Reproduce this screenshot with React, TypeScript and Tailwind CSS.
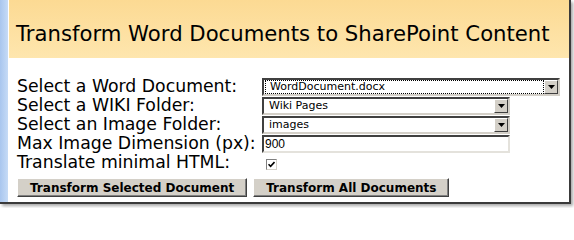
import React from 'react';

const sans = { fontFamily: '"DejaVu Sans", Verdana, sans-serif' };

function DropArrow() {
  return (
    <div className="flex h-[14px] w-[14px] shrink-0 items-center justify-center border border-t-white border-l-white border-r-[#404040] border-b-[#404040] bg-[#d4d0c8]">
      <svg width="7" height="4" viewBox="0 0 7 4">
        <path d="M0 0h7L3.5 4z" fill="#000" />
      </svg>
    </div>
  );
}

function Select({ value, width, focused }: { value: string; width: string; focused?: boolean }) {
  return (
    <div className={`flex h-[18px] items-center border-2 border-t-[#404040] border-l-[#404040] border-r-[#d4d0c8] border-b-[#d4d0c8] bg-white ${width}`}>
      <div
        className={`ml-[1px] flex h-[14px] flex-1 items-center pl-[4px] text-[11px] leading-none text-black ${
          focused ? 'border border-dotted border-black' : ''
        }`}
      >
        {value}
      </div>
      <DropArrow />
    </div>
  );
}

function Label({ children }: { children: React.ReactNode }) {
  return <div className="text-[17.3px] leading-none text-black">{children}</div>;
}

function Button({ children }: { children: React.ReactNode }) {
  return (
    <div className="flex h-[19px] items-center border border-t-white border-l-white border-r-[#404040] border-b-[#404040] bg-[#d4d0c8] px-[12px] text-[12px] font-bold leading-none text-black shadow-[inset_-1px_-1px_0_#808080]">
      {children}
    </div>
  );
}

export default function App() {
  return (
    <div className="h-[208px] w-[574px] overflow-hidden bg-white" style={sans}>
      <div className="flex h-[204px] w-[571px] border-r-2 border-b-2 border-[#3a3a3a] shadow-[2px_2px_3px_rgba(0,0,0,0.35)]">
        {/* left strip */}
        <div className="w-[8px] shrink-0 bg-gradient-to-r from-[#a9c6ee] to-[#c6dbf6]" />
        <div className="w-[1px] shrink-0 bg-white" />

        <div className="flex flex-1 flex-col">
          {/* header */}
          <div className="flex h-[58px] items-center bg-gradient-to-b from-[#fcda93] to-[#fee6ae] pl-[7px] pt-[9px]">
            <h1 className="text-[21.2px] font-normal leading-none text-black">
              Transform Word Documents to SharePoint Content
            </h1>
          </div>

          {/* form */}
          <div className="flex flex-col pl-[8px] pt-[19px]">
            <div className="grid grid-cols-[245px_1fr] grid-rows-[19px_19px_19px_19px_19px] items-center">
              <Label>Select a Word Document:</Label>
              <Select value="WordDocument.docx" width="w-[298px]" focused />

              <Label>Select a WIKI Folder:</Label>
              <Select value="Wiki Pages" width="w-[248px]" />

              <Label>Select an Image Folder:</Label>
              <Select value="images" width="w-[248px]" />

              <Label>Max Image Dimension (px):</Label>
              <div className="flex h-[18px] w-[248px] items-center border-2 border-t-[#404040] border-l-[#404040] border-r-[#e4e2dc] border-b-[#e4e2dc] bg-white pl-[1px] text-[12px] leading-none text-black" style={{ fontFamily: '"Liberation Sans", Arial, sans-serif' }}>
                900
              </div>

              <Label>Translate minimal HTML:</Label>
              <div className="pl-[4px] pt-[3px]">
                <div className="flex h-[11px] w-[11px] items-center justify-center border border-t-[#808080] border-l-[#808080] border-r-[#d4d0c8] border-b-[#d4d0c8] bg-white">
                  <svg width="7" height="7" viewBox="0 0 7 7">
                    <path d="M0.5 3.2L2.6 5.3L6.5 1" stroke="#000" strokeWidth="1.6" fill="none" />
                  </svg>
                </div>
              </div>
            </div>

            <div className="mt-[6px] flex gap-[6px]">
              <Button>Transform Selected Document</Button>
              <Button>Transform All Documents</Button>
            </div>
          </div>
        </div>
      </div>
    </div>
  );
}
